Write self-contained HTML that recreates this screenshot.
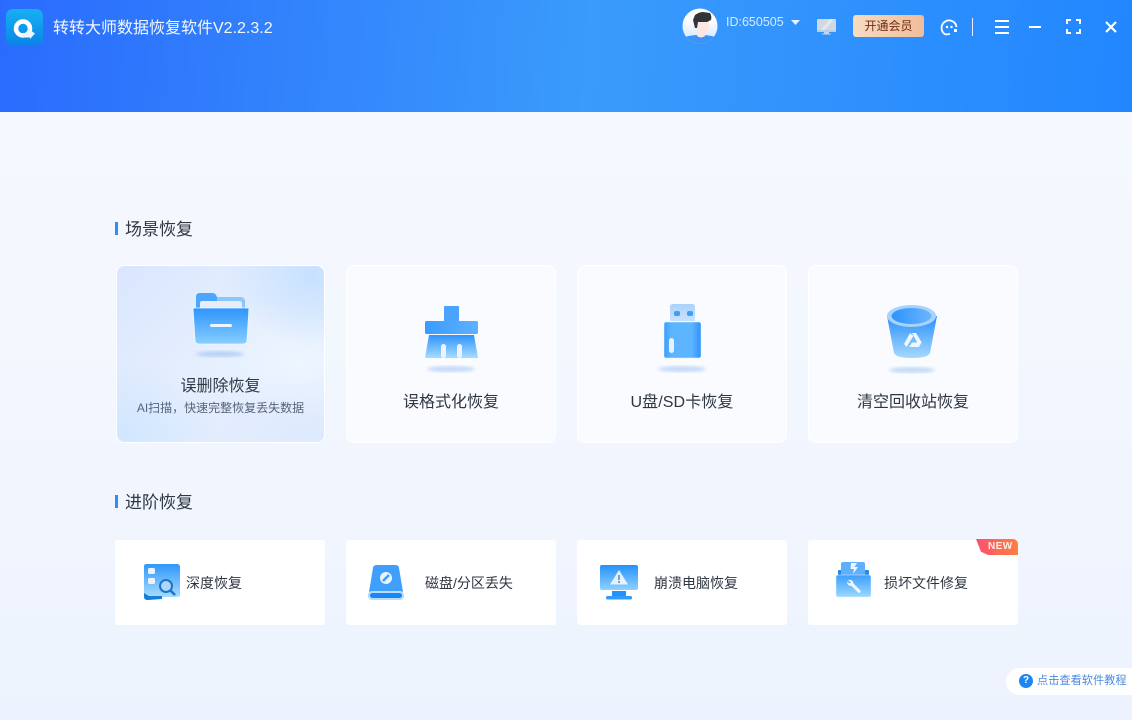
<!DOCTYPE html>
<html lang="zh"><head><meta charset="utf-8"><style>
html,body{margin:0;padding:0}
body{width:1132px;height:720px;overflow:hidden;position:relative;background:linear-gradient(180deg,#f5f9ff 112px,#f3f7fe 340px,#edf3fe 720px);font-family:"Liberation Sans","Noto Sans CJK SC",sans-serif;color:#2b3340}
.a{position:absolute}
.hd{left:0;top:0;width:1132px;height:112px;background:linear-gradient(95deg,#2a6bfd 0%,#3a9bfb 52%,#2286ff 100%)}
.t{position:absolute;white-space:nowrap}
.card{position:absolute;top:265px;width:209px;height:178px;box-sizing:border-box;background:#f9fbff;border:1px solid #fff;border-radius:8px}
.c2{position:absolute;top:540px;width:210px;height:85px;background:#fff;border-radius:3px}
.ct{font-size:16px;line-height:20px;text-align:center;color:#2f3743}
.sh{font-size:17px;line-height:20px;color:#2f3743}
.lb{font-size:14px;line-height:16px;color:#2f3743}
svg{position:absolute;overflow:visible}
</style></head><body>
<div class="a hd"></div>

<svg style="left:6px;top:9px" width="37" height="37" viewBox="0 0 37 37">
<defs><linearGradient id="lg" x1="0" y1="0" x2="0" y2="1"><stop offset="0" stop-color="#17b0f4"/><stop offset="1" stop-color="#0a84e6"/></linearGradient></defs>
<rect width="37" height="37" rx="7" fill="url(#lg)"/>
<circle cx="17" cy="19.500" r="7" fill="none" stroke="#fff" stroke-width="4.500"/>
<path d="M16 24 H22 V19.500 L29 24.500 L24 30 V28.500 H16 Z" fill="#eaf6fe"/>
</svg>
<div class="t" style="left:53px;top:18px;font-size:16px;line-height:21px;color:#f4f8ff">转转大师数据恢复软件V2.2.3.2</div>

<svg style="left:682px;top:8px" width="36" height="36" viewBox="0 0 36 36">
<defs><clipPath id="av"><circle cx="18" cy="18" r="17.500"/></clipPath><linearGradient id="avb" x1="0" y1="0" x2="0" y2="1"><stop offset=".3" stop-color="#fff"/><stop offset=".8" stop-color="#d8ecff"/></linearGradient></defs>
<g clip-path="url(#av)"><rect width="36" height="36" fill="url(#avb)"/>
<path d="M0 36 V30 Q6 27.500 14 27 H22 Q30 27.500 36 30 V36 Z" fill="#3a93f5"/>
<path d="M15 12 H27 V21 Q25 25 23 25 V28 Q19 31 15 28 Z" fill="#fde6e2"/>
<path d="M11 12 L13 7 Q17 4 21 4 L28 5 Q30 8 29 12 L25 14 L16 14 L15 20 H13 Z" fill="#333438"/></g>
</svg>
<div class="t" style="left:726px;top:15px;font-size:12.500px;line-height:15px;color:#d6e9ff">ID:650505</div>
<svg style="left:791px;top:20px" width="9" height="6"><path d="M0 0 H9 L4.500 5 Z" fill="#eaf3ff"/></svg>
<svg style="left:817px;top:19px" width="19" height="16" viewBox="0 0 19 16">
<path d="M0 1 Q0 0 1 0 H18 Q19 0 19 1 V12 H0 Z" fill="#d0d8e4"/><path d="M3 12 L13 0 H17 L7 12Z" fill="#e2e8f0"/><rect x="0" y="11" width="19" height="2" fill="#b9cde4"/><rect x="7" y="13" width="5" height="1.500" fill="#c6d4e6"/><rect x="5" y="14.500" width="9" height="1" fill="#c6d4e6"/></svg>
<div class="a" style="left:853px;top:15px;width:71px;height:22px;border-radius:3px;background:linear-gradient(90deg,#f8dcc2,#efbd9b)"></div>
<div class="t" style="left:853px;top:15px;width:71px;text-align:center;font-size:12px;line-height:22px;color:#6e2d12">开通会员</div>
<svg style="left:940px;top:18px" width="18" height="18" viewBox="0 0 18 18" fill="none"><path d="M5.500 16.500 A7.500 7.500 0 1 1 16.500 9" stroke="#fff" stroke-width="1.800"/><path d="M5 16.500 L10 16" stroke="#fff" stroke-width="1.800"/><circle cx="7" cy="9" r="1.200" fill="#fff"/><circle cx="11.500" cy="9" r="1.200" fill="#fff"/><rect x="14" y="11" width="3" height="3" fill="#fff"/></svg>
<div class="a" style="left:972px;top:18px;width:1px;height:18px;background:#e8f2ff"></div>
<svg style="left:995px;top:20px" width="14" height="15"><path d="M0 1 H14 M0 7 H14 M0 13 H14" stroke="#fff" stroke-width="2"/></svg>
<svg style="left:1029px;top:26px" width="12" height="2"><rect width="12" height="2" fill="#fff"/></svg>
<svg style="left:1066px;top:19px" width="15" height="15" fill="none"><path d="M1 5 V1 H5 M10 1 H14 V5 M14 10 V14 H10 M5 14 H1 V10" stroke="#fff" stroke-width="2"/></svg>
<svg style="left:1105px;top:21px" width="12" height="12"><path d="M1 1 L11 11 M11 1 L1 11" stroke="#fff" stroke-width="2.200"/></svg>

<div class="a" style="left:115px;top:222px;width:3px;height:13px;background:#2f8dfb"></div>
<div class="t sh" style="left:125px;top:220px">场景恢复</div>

<div class="card" style="left:116px;background:linear-gradient(135deg,#d9e6fe 0%,#e6effe 50%,#dde9fd 100%)"></div>
<div class="a" style="left:117px;top:266px;width:207px;height:176px;border-radius:8px;background:radial-gradient(ellipse 90px 70px at 95% 5%,rgba(196,224,255,.95),rgba(196,224,255,0)),radial-gradient(ellipse 110px 60px at 90% 55%,rgba(238,246,255,.9),rgba(238,246,255,0)),radial-gradient(ellipse 90px 70px at 5% 95%,rgba(200,227,255,.7),rgba(200,227,255,0))"></div>
<svg style="left:193px;top:293px" width="56" height="62" viewBox="0 0 56 62">
<defs><linearGradient id="f1" x1="0" y1="0" x2="0" y2="1"><stop offset="0" stop-color="#2f94fe"/><stop offset="1" stop-color="#86ceff"/></linearGradient><filter id="bl"><feGaussianBlur stdDeviation="1.500"/></filter></defs>
<path d="M3 16 V4 Q3 0 7 0 H19 Q22 0 23 2 L24 4 H47 Q52 4 52 9 V16 Z" fill="#4da6fd"/><path d="M24 4 H47 Q52 4 52 9 V16 H24Z" fill="#8cc7fb"/>
<path d="M7 15 V10 Q7 8 9 8 H46 Q49 8 49 10 V15 Z" fill="#e6edf8"/>
<path d="M0 15 H56 L54 47 Q54 51 50 51 H6 Q2 51 2 47 Z" fill="url(#f1)" stroke="#eef7ff" stroke-width=".8"/>
<rect x="17" y="31" width="22" height="3" rx="1.500" fill="#edf6ff"/>
<ellipse cx="27" cy="61" rx="24" ry="3" fill="#b8d2f6" filter="url(#bl)"/>
</svg>
<div class="t ct" style="left:116px;width:209px;top:377px">误删除恢复</div>
<div class="t" style="left:116px;width:209px;text-align:center;top:401px;font-size:12px;line-height:15px;color:#56647c">AI扫描，快速完整恢复丢失数据</div>

<div class="card" style="left:346px;width:210px"></div>
<svg style="left:425px;top:306px" width="53" height="68" viewBox="0 0 53 68">
<defs><linearGradient id="f2" x1="0" y1="0" x2="0" y2="1"><stop offset="0" stop-color="#2f93fd"/><stop offset="1" stop-color="#a6dcff"/></linearGradient><linearGradient id="f3" x1="0" y1="0" x2="1" y2="0"><stop offset="0" stop-color="#3a9bfe"/><stop offset="1" stop-color="#5fb0ff"/></linearGradient></defs>
<path d="M19 1 Q19 0 20 0 H33 Q34 0 34 1 V15 H19Z" fill="#4aa3ff"/>
<rect x="0" y="15" width="53" height="13" rx="1.500" fill="url(#f3)"/>
<path d="M4 29 H49 L53 52 H0 Z" fill="url(#f2)"/>
<rect x="16" y="38" width="5" height="14" rx="2.500" fill="#ecf3fd"/><rect x="32" y="38" width="5" height="14" rx="2.500" fill="#ecf3fd"/>
<ellipse cx="26" cy="63" rx="24" ry="3" fill="#c4daf8" filter="url(#bl)"/>
</svg>
<div class="t ct" style="left:346px;width:210px;top:393px">误格式化恢复</div>

<div class="card" style="left:577px;width:210px"></div>
<svg style="left:657px;top:304px" width="50" height="70" viewBox="0 0 50 70">
<defs><linearGradient id="f4" x1="0" y1="0" x2="1" y2="0"><stop offset="0" stop-color="#3b9dfe"/><stop offset=".2" stop-color="#5db5ff"/><stop offset=".75" stop-color="#5db5ff"/><stop offset="1" stop-color="#2f91fc"/></linearGradient><linearGradient id="f4b" x1="0" y1="0" x2="0" y2="1"><stop offset="0" stop-color="#a9d2fb"/><stop offset="1" stop-color="#c9e2fc"/></linearGradient></defs>
<path d="M13 3 Q13 0 16 0 H35 Q38 0 38 3 V17 H13Z" fill="url(#f4b)"/><rect x="17" y="7" width="6" height="5" rx="2" fill="#3f9dfb"/><rect x="30" y="7" width="6" height="5" rx="2" fill="#3f9dfb"/>
<rect x="7" y="18" width="37" height="36" rx="2" fill="url(#f4)" stroke="#e4f1ff" stroke-width=".5"/>
<rect x="12" y="34" width="5" height="15" rx="2.500" fill="#e8f2fd"/>
<ellipse cx="25" cy="65" rx="24" ry="3" fill="#c4daf8" filter="url(#bl)"/>
</svg>
<div class="t ct" style="left:577px;width:210px;top:393px;letter-spacing:.1px">U盘/SD卡恢复</div>

<div class="card" style="left:808px;width:210px"></div>
<svg style="left:887px;top:304px" width="52" height="70" viewBox="0 0 52 70">
<defs><linearGradient id="f5" x1="0" y1="0" x2="0" y2="1"><stop offset="0" stop-color="#2a90fd"/><stop offset="1" stop-color="#a5d9ff"/></linearGradient><linearGradient id="f6" x1="0" y1="0" x2="1" y2="0"><stop offset="0" stop-color="#2d92fd"/><stop offset="1" stop-color="#6ab6fd"/></linearGradient><filter id="bl2"><feGaussianBlur stdDeviation="1.500"/></filter></defs>
<path d="M0 12 L7 49 Q9 54 25 54 Q41 54 43 49 L50 12 Z" fill="url(#f5)"/>
<ellipse cx="24.500" cy="12" rx="24.500" ry="11" fill="#a6d2fb"/><ellipse cx="24.500" cy="12" rx="20" ry="8" fill="url(#f6)"/>
<path d="M23 29 L17 40 L19.500 43 L26.500 32Z M25 29 H29 L35 39 H30.500 Z M22 43 L25 38.500 H34.500 L32 43 Z" fill="#eef6fe"/>
<ellipse cx="25" cy="66" rx="23" ry="3" fill="#c4daf8" filter="url(#bl2)"/>
</svg>
<div class="t ct" style="left:808px;width:210px;top:393px">清空回收站恢复</div>

<div class="a" style="left:115px;top:495px;width:3px;height:13px;background:#2f8dfb"></div>
<div class="t sh" style="left:125px;top:493px">进阶恢复</div>

<div class="c2" style="left:115px"></div>
<svg style="left:144px;top:563px" width="36" height="38" viewBox="0 0 36 38">
<defs><linearGradient id="g1" x1="0" y1="0" x2="0" y2="1"><stop offset="0" stop-color="#2f96fa"/><stop offset="1" stop-color="#a8dcfe"/></linearGradient></defs>
<path d="M0 3 Q0 1 3 1 L33 1 Q36 1 36 4 V32 Q36 34 33 34 L12 34 L0 32 Z" fill="url(#g1)"/>
<path d="M0 30 L5 33 H18 V36 L4 37 Q0 37 0 34 Z" fill="#127fdc"/>
<rect x="4" y="5" width="7" height="6" rx="1.500" fill="#e9f3fe"/><rect x="4" y="15" width="7" height="6" rx="1.500" fill="#e9f3fe"/>
<circle cx="22" cy="23" r="6" fill="#a9d8fb" stroke="#1f73c6" stroke-width="2"/><path d="M26.500 27.500 L31 32" stroke="#1f73c6" stroke-width="2.500"/>
</svg>
<div class="t lb" style="left:186px;top:575px">深度恢复</div>

<div class="c2" style="left:346px"></div>
<svg style="left:368px;top:565px" width="36" height="35" viewBox="0 0 36 35">
<path d="M5 3 Q5 0 9 0 H27 Q31 0 31 3 L35 27 H1Z" fill="#409efd"/>
<rect x="0" y="26" width="36" height="9" rx="4" fill="#b9dcfc"/><rect x="2" y="28" width="32" height="5" rx="2.500" fill="#1a87f2"/>
<circle cx="18" cy="13" r="6" fill="#e8f3fe"/><path d="M15 16 L21 10" stroke="#3f9cf8" stroke-width="2.500"/>
</svg>
<div class="t lb" style="left:425px;top:575px">磁盘/分区丢失</div>

<div class="c2" style="left:577px"></div>
<svg style="left:600px;top:565px" width="38" height="35" viewBox="0 0 38 35">
<defs><linearGradient id="g2" x1="0" y1="0" x2="0" y2="1"><stop offset="0" stop-color="#2492fb"/><stop offset="1" stop-color="#8fd1ff"/></linearGradient></defs>
<rect width="38" height="25" rx="2" fill="url(#g2)"/>
<path d="M19 5 L28 19.500 H10Z" fill="#e6f1fd"/><rect x="18" y="10" width="2" height="5" fill="#7a9ecb"/><rect x="18" y="16" width="2" height="2" fill="#7a9ecb"/>
<rect x="12" y="26" width="14" height="5" fill="#2292fb"/><rect x="6" y="31" width="26" height="3.500" rx="1.500" fill="#2f9bfd"/>
</svg>
<div class="t lb" style="left:654px;top:575px">崩溃电脑恢复</div>

<div class="c2" style="left:808px;width:210px"></div>
<div class="a" style="left:976px;top:539px;width:42px;height:16px;background:linear-gradient(90deg,#fd4f72,#ff7f3f);border-radius:0 5px 0 7px;clip-path:polygon(0 0,100% 0,100% 100%,12px 100%,5px 80%)"></div>
<div class="t" style="left:988px;top:540px;font-size:10px;font-weight:bold;line-height:14px;color:#fdeee6;letter-spacing:.4px">NEW</div>
<svg style="left:836px;top:561px" width="35" height="37" viewBox="0 0 35 37">
<defs><linearGradient id="g3" x1="0" y1="0" x2="0" y2="1"><stop offset="0" stop-color="#3d9ffc"/><stop offset="1" stop-color="#9ad8ff"/></linearGradient></defs>
<rect x="2" y="9" width="31" height="6" rx="1" fill="#2b87e8"/>
<path d="M5 3 Q5 1 7 1 H27 Q29 1 29 3 V14 H5Z" fill="#5fb0fc"/>
<path d="M15 2 H21 L18.500 6 H22 L17 13 L18 8 H14.500 Z" fill="#eef6fe"/>
<rect y="14" width="35" height="22" rx="2" fill="url(#g3)" stroke="#e4f1ff" stroke-width=".5"/>
<path d="M12 19 Q17 18 17.500 22.500 L24.500 29.500 Q25 32 22.500 32 L15.500 25 Q11 25 11 20.500 L13.500 22.500 L15 21.500Z" fill="#edf6fe"/>
</svg>
<div class="t lb" style="left:884px;top:575px">损坏文件修复</div>

<div class="a" style="left:1006px;top:668px;width:140px;height:27px;border-radius:14px;background:#fff"></div>
<svg style="left:1019px;top:674px" width="14" height="14"><circle cx="7" cy="7" r="7" fill="#1e86f0"/></svg>
<div class="t" style="left:1019px;top:674px;width:14px;text-align:center;font-size:10px;font-weight:bold;line-height:14px;color:#fff">?</div>
<div class="t" style="left:1037px;top:674px;font-size:11.200px;line-height:15px;color:#4a8ae0">点击查看软件教程</div>
</body></html>
